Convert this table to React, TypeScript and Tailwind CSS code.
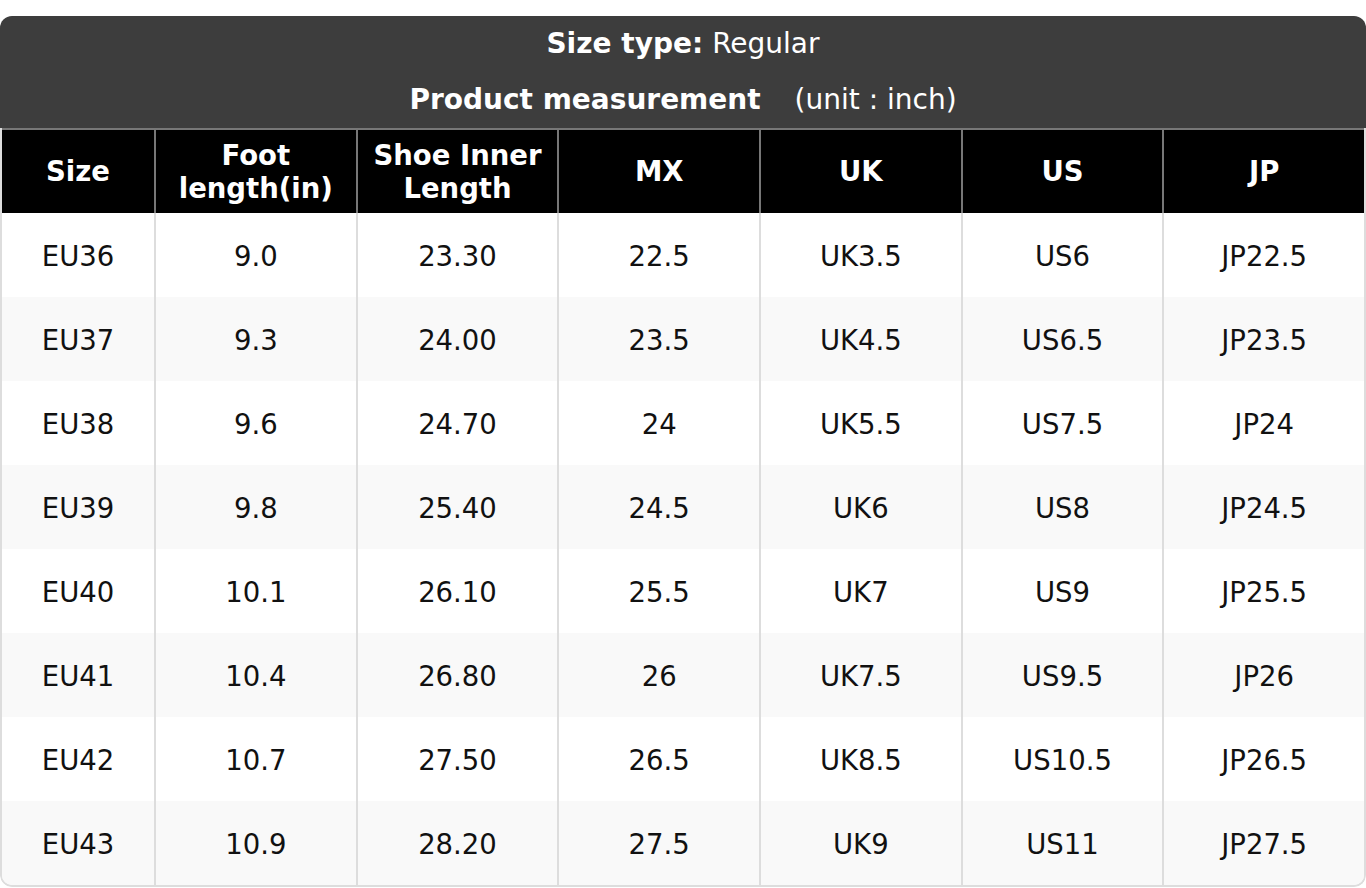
const headers = ['Size', 'Foot length(in)', 'Shoe Inner Length', 'MX', 'UK', 'US', 'JP'];

const rows = [
  ['EU36', '9.0', '23.30', '22.5', 'UK3.5', 'US6', 'JP22.5'],
  ['EU37', '9.3', '24.00', '23.5', 'UK4.5', 'US6.5', 'JP23.5'],
  ['EU38', '9.6', '24.70', '24', 'UK5.5', 'US7.5', 'JP24'],
  ['EU39', '9.8', '25.40', '24.5', 'UK6', 'US8', 'JP24.5'],
  ['EU40', '10.1', '26.10', '25.5', 'UK7', 'US9', 'JP25.5'],
  ['EU41', '10.4', '26.80', '26', 'UK7.5', 'US9.5', 'JP26'],
  ['EU42', '10.7', '27.50', '26.5', 'UK8.5', 'US10.5', 'JP26.5'],
  ['EU43', '10.9', '28.20', '27.5', 'UK9', 'US11', 'JP27.5'],
];

const grid = 'grid grid-cols-[152px_repeat(6,minmax(0,1fr))]';

export default function App() {
  return (
    <div className="min-h-screen bg-white pt-4 font-['DejaVu_Sans',sans-serif]">
      <div className="rounded-[12px] overflow-hidden">
        {/* Title block */}
        <div className="bg-[#3d3d3d] text-white text-[28px]">
          <div className="h-[56px] flex items-center justify-center">
            <span className="font-bold">Size type:</span>
            <span className="ml-[9px]">Regular</span>
          </div>
          <div className="h-[56px] flex items-center justify-center">
            <span className="font-bold">Product measurement</span>
            <span className="ml-[34px]">(unit : inch)</span>
          </div>
        </div>

        {/* Table */}
        <div className="border-x-2 border-b-2 border-[#ddd] rounded-b-[12px] overflow-hidden">
          <div className={`${grid} h-[85px] bg-black border-t-2 border-[#777] text-white text-[27.5px] font-bold leading-[33px]`}>
            {headers.map((h, i) => (
              <div
                key={h}
                className={`flex items-center justify-center text-center px-1 ${i > 0 ? 'border-l-2 border-[#777]' : ''}`}
              >
                {h}
              </div>
            ))}
          </div>
          {rows.map((r, ri) => (
            <div
              key={r[0]}
              className={`${grid} h-[84px] text-[27.5px] text-[#111] ${ri % 2 === 1 ? 'bg-[#f9f9f9]' : 'bg-white'}`}
            >
              {r.map((c, ci) => (
                <div
                  key={ci}
                  className={`flex items-center justify-center pt-[3px] ${ci > 0 ? 'border-l-2 border-[#ddd]' : ''}`}
                >
                  {c}
                </div>
              ))}
            </div>
          ))}
        </div>
      </div>
    </div>
  );
}
